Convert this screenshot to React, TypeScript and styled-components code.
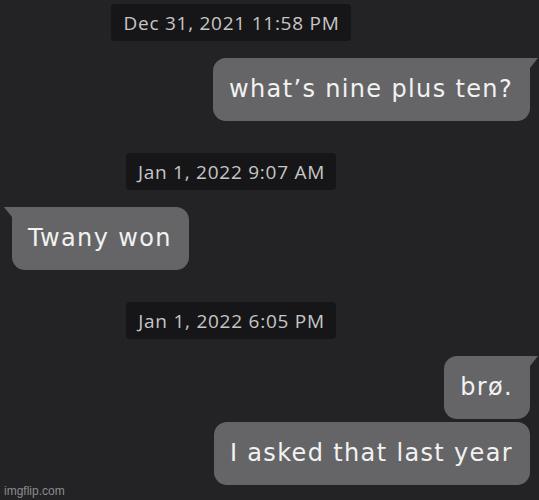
import React from 'react';
import styled, { createGlobalStyle } from 'styled-components';

const GlobalStyle = createGlobalStyle`
    html, body {
        margin: 0;
        padding: 0;
        background: #232325;
    }
    body {
        width: 539px;
        height: 500px;
        overflow: hidden;
        font-family: "Open Sans", "Noto Sans", sans-serif;
    }
`;

const Screen = styled.div`
    position: relative;
    width: 539px;
    height: 500px;
    background: #232325;
    display: flex;
    flex-direction: column;
    gap: 32px;
    padding-top: 4px;
    box-sizing: border-box;
`;

const Group = styled.div`
    display: flex;
    flex-direction: column;
`;

const StampRow = styled.div`
    display: flex;
    justify-content: center;
    padding-right: 77px;
    margin-bottom: 17px;
`;

const Stamp = styled.div`
    height: 37px;
    padding: 0 11px 0 12px;
    display: flex;
    align-items: center;
    background: #161618;
    border-radius: 4px;
    color: #c6c6c6;
    font-size: 19px;
    letter-spacing: 0.75px;
`;

const Thread = styled.div<{ side: 'left' | 'right' }>`
    display: flex;
    flex-direction: column;
    align-items: ${(p) => (p.side === 'right' ? 'flex-end' : 'flex-start')};
    gap: 3px;
    padding: ${(p) => (p.side === 'right' ? '0 9px 0 0' : '0 0 0 12px')};
`;

const Bubble = styled.div<{ side: 'left' | 'right'; tail?: boolean }>`
    position: relative;
    height: 63px;
    padding: 0 17px 2px 16px;
    display: flex;
    align-items: center;
    background: #656567;
    color: #f2f2f2;
    font-family: "DejaVu Sans", "Open Sans", sans-serif;
    font-size: 24px;
    letter-spacing: 1.35px;
    border-radius: 13px;
    box-sizing: border-box;
    ${(p) =>
        p.tail && p.side === 'right' ? 'border-top-right-radius: 0;' : ''}
    ${(p) =>
        p.tail && p.side === 'left' ? 'border-top-left-radius: 0;' : ''}

    &::after {
        content: '';
        display: ${(p) => (p.tail ? 'block' : 'none')};
        position: absolute;
        top: 0;
        ${(p) => (p.side === 'right' ? 'right: -8px;' : 'left: -8px;')}
        width: 8px;
        height: 10px;
        background: #656567;
        clip-path: ${(p) =>
            p.side === 'right'
                ? 'polygon(0 0, 100% 0, 0 100%)'
                : 'polygon(0 0, 100% 0, 100% 100%)'};
    }
`;

const Watermark = styled.div`
    position: absolute;
    left: 4px;
    bottom: 2px;
    font-family: "Liberation Sans", Arial, sans-serif;
    font-size: 12px;
    color: #8c8c8c;
`;

interface IMessage {
    text: string;
    tail?: boolean;
}

interface IGroup {
    stamp: string;
    side: 'left' | 'right';
    messages: IMessage[];
}

const groups: IGroup[] = [
    { stamp: 'Dec 31, 2021 11:58 PM', side: 'right', messages: [{ text: 'what’s nine plus ten?', tail: true }] },
    { stamp: 'Jan 1, 2022 9:07 AM', side: 'left', messages: [{ text: 'Twany won', tail: true }] },
    {
        stamp: 'Jan 1, 2022 6:05 PM',
        side: 'right',
        messages: [{ text: 'brø.', tail: true }, { text: 'I asked that last year' }],
    },
];

const App: React.FC = () => {
    return (
        <>
            <GlobalStyle />
            <Screen>
                {groups.map((g) => (
                    <Group key={g.stamp}>
                        <StampRow>
                            <Stamp>{g.stamp}</Stamp>
                        </StampRow>
                        <Thread side={g.side}>
                            {g.messages.map((m) => (
                                <Bubble key={m.text} side={g.side} tail={m.tail}>
                                    {m.text}
                                </Bubble>
                            ))}
                        </Thread>
                    </Group>
                ))}
                <Watermark>imgflip.com</Watermark>
            </Screen>
        </>
    );
};

export default App;
